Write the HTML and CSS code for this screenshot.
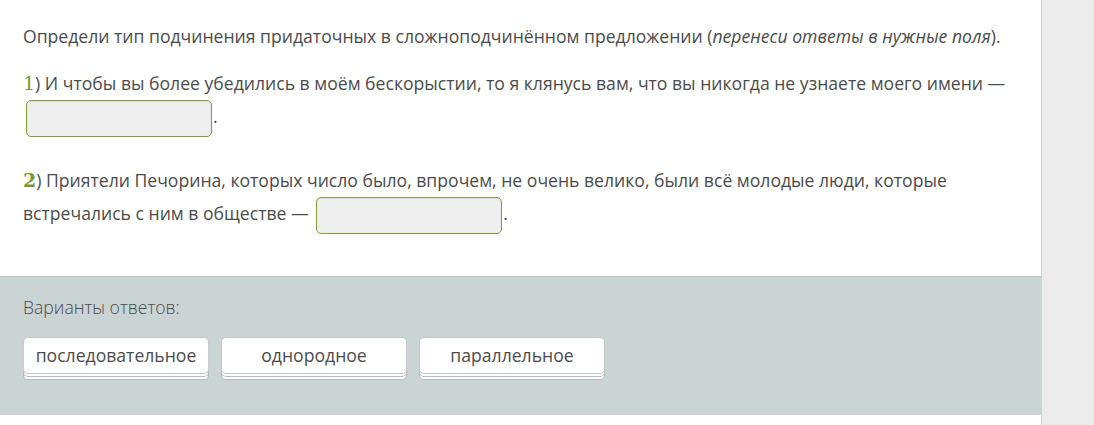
FILE: index.html
```html
<!DOCTYPE html>
<html lang="ru">
<head>
    <meta charset="UTF-8">
    <title>Тип подчинения придаточных</title>
    <link rel="stylesheet" href="styles.css">
</head>
<body>
    <div class="page">
        <main class="task">
            <section class="question">
                <p class="prompt">Определи тип подчинения придаточных в сложноподчинённом предложении (<em>перенеси ответы в нужные поля</em>).</p>

                <p class="item">
                    <span class="num">1</span>) И чтобы вы более убедились в моём бескорыстии, то я клянусь вам, что вы никогда не узнаете моего имени —
                    <span class="drop"></span>.
                </p>

                <p class="item">
                    <span class="num bold">2</span>) Приятели Печорина, которых число было, впрочем, не очень велико, были всё молодые люди, которые встречались с ним в обществе — <span class="drop"></span>.
                </p>
            </section>

            <section class="options">
                <h4>Варианты ответов:</h4>
                <div class="choices">
                    <div class="choice">последовательное</div>
                    <div class="choice">однородное</div>
                    <div class="choice">параллельное</div>
                </div>
            </section>
        </main>
        <aside class="side"></aside>
    </div>
</body>
</html>
```

FILE: styles.css
```css
/* Base */
* {
    margin: 0;
    padding: 0;
    box-sizing: border-box;
}

body {
    font-family: 'Open Sans', 'Noto Sans', sans-serif;
    font-size: 17.6px;
    color: #4b4b4b;
    background: #ececec;
}

.page {
    display: flex;
    height: 425px;
}

/* Main task column */
.task {
    width: 1042px;
    background: #fff;
    border-right: 1px solid #d4d4d4;
    padding-bottom: 10px;
}

.question {
    padding: 23px 23px 27px;
    height: 276px;
}

.prompt {
    line-height: 26px;
    margin-bottom: 18px;
}

.prompt em {
    font-style: italic;
}

.item {
    line-height: 33px;
    margin-bottom: 27px;
}

.num {
    font-family: 'DejaVu Serif', serif;
    font-size: 19px;
    line-height: 1;
    color: #7a9a2c;
}

.num.bold {
    font-weight: bold;
}

.drop {
    display: inline-block;
    width: 186px;
    height: 37px;
    vertical-align: middle;
    background: #efefef;
    border: 1px solid #7f9f36;
    border-radius: 5px;
    box-shadow: inset 0 1px 2px rgba(0,0,0,0.08);
    margin: 0 1px 0 3px;
}

/* Answer options */
.options {
    background: #cbd4d5;
    border-top: 1px solid #b8c0c0;
    padding: 19px 23px 0;
    height: 139px;
}

.options h4 {
    font-weight: 300;
    font-size: 17.6px;
    line-height: 22px;
    margin-bottom: 19px;
}

.choices {
    display: flex;
    gap: 12px;
}

.choice {
    width: 186px;
    height: 37px;
    line-height: 35px;
    text-align: center;
    background: #fff;
    border: 1px solid #c3cbcb;
    border-radius: 5px;
    box-shadow: 0 3px 0 -1px #fff, 0 3px 0 0 #b5bcbc, 0 6px 0 -1px #fff, 0 6px 0 0 #b5bcbc;
}

.side {
    flex: 1;
}
```
